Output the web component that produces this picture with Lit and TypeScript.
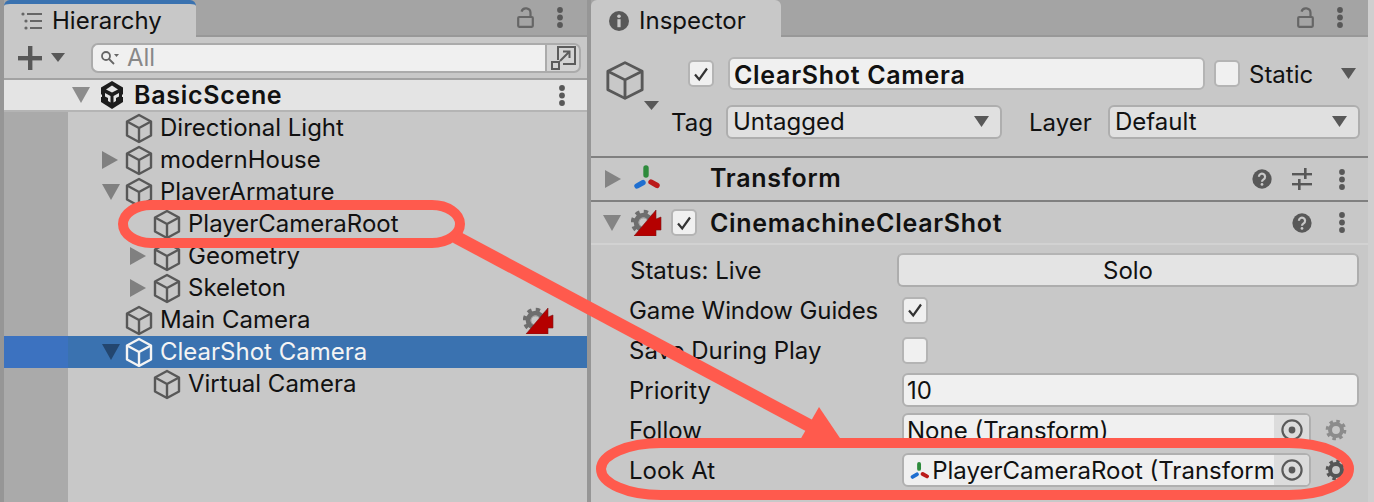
import { LitElement, html, css, svg } from "lit";
import { customElement } from "lit/decorators.js";

const GREY = "#585858";

const tri = (dir: "right" | "down", w: number, h: number, color = "#848484") => html`<svg class="tri" width=${w} height=${h} viewBox="0 0 10 10" preserveAspectRatio="none">
  <polygon points=${dir === "right" ? "0,0 10,5 0,10" : "0,0 10,0 5,10"} fill=${color}></polygon>
</svg>`;

const cube = (w = 28, h = 31, color = GREY, sw = 2.4) => html`<svg class="cube" width=${w} height=${h} viewBox="0 0 28 31" preserveAspectRatio="none" fill="none" stroke=${color} stroke-width=${sw} stroke-linejoin="round">
  <path d="M14 2 26 8.5V22.5L14 29 2 22.5V8.5Z"></path>
  <path d="M2 8.5 14 15 26 8.5M14 15V29"></path>
</svg>`;

const dots = () => html`<svg class="dots" width="8" height="21" viewBox="0 0 8 21" fill=${GREY}>
  <circle cx="4" cy="3" r="2.9"></circle><circle cx="4" cy="10.5" r="2.9"></circle><circle cx="4" cy="18" r="2.9"></circle>
</svg>`;

const lock = () => html`<svg width="17" height="21" viewBox="0 0 17 21" fill="none" stroke="#666" stroke-width="2.2">
  <rect x="1.2" y="10" width="14.6" height="9.8" rx="1"></rect>
  <path d="M13.5 10V6a4.6 4.6 0 0 0-9-1.4"></path>
</svg>`;

const axes = (s = 1) => html`<svg class="axes" width=${28 * s} height=${26 * s} viewBox="0 0 28 26" fill="none" stroke-width="5.4" stroke-linecap="round">
  <path d="M14 4V11" stroke="#2e8b3c"></path>
  <path d="M5 22 11 18.6" stroke="#1f6fd0"></path>
  <path d="M19 18 25 21.4" stroke="#bb1a1a"></path>
</svg>`;

const gearShape = (color: string) => svg`
  <circle cx="12" cy="12" r="6.5" fill="none" stroke=${color} stroke-width="4.4"></circle>
  <circle cx="12" cy="12" r="9.6" fill="none" stroke=${color} stroke-width="3.4" stroke-dasharray="3.8 3.74"></circle>`;

const gear = (color: string) => html`<svg width="22" height="22" viewBox="0 0 24 24">${gearShape(color)}</svg>`;

const camIcon = () => html`<svg width="31" height="27" viewBox="0 0 31 27">
  <g transform="translate(-1 0) scale(1.12)">${gearShape("#6e6e6e")}</g>
  <circle cx="12.5" cy="13.5" r="4.5" fill="none" stroke="#a0a0a0" stroke-width="1"></circle>
  <polygon points="3,27 25,1 25,10 30,8 30,21 25,21 25,27" fill="#b50000" stroke="#7a1a1a" stroke-width="0.6"></polygon>
</svg>`;

const help = () => html`<svg width="20" height="20" viewBox="0 0 22 22">
  <circle cx="11" cy="11" r="10.6" fill=${GREY}></circle>
  <path d="M7.6 8.6a3.4 3.4 0 1 1 5.2 2.8c-1.2.8-1.8 1.2-1.8 2.6" fill="none" stroke="#c8c8c8" stroke-width="2.4"></path>
  <circle cx="11" cy="17" r="1.5" fill="#c8c8c8"></circle>
</svg>`;

const sliders = () => html`<svg class="sliders" width="20" height="22" viewBox="0 0 20 22" fill=${GREY}>
  <rect x="0" y="5" width="20" height="2.4"></rect><rect x="12" y="0" width="2.6" height="11"></rect>
  <rect x="0" y="15" width="20" height="2.4"></rect><rect x="6" y="11" width="2.6" height="11"></rect>
</svg>`;

const picker = () => html`<svg width="26" height="26" viewBox="0 0 26 26">
  <circle cx="13" cy="13" r="9.6" fill="none" stroke="#5a5a5a" stroke-width="2.2"></circle>
  <circle cx="13" cy="13" r="3.4" fill="#5a5a5a"></circle>
</svg>`;

const check = () => html`<svg width="16" height="16" viewBox="0 0 16 16" fill="none" stroke="#333" stroke-width="2.2">
  <path d="M2 8.5 6.2 13.5 14 2.5"></path>
</svg>`;

type TreeRow = { name: string; depth: number; arrow?: "right" | "down"; selected?: boolean; cam?: boolean };

const TREE: TreeRow[] = [
  { name: "Directional Light", depth: 0 },
  { name: "modernHouse", depth: 0, arrow: "right" },
  { name: "PlayerArmature", depth: 0, arrow: "down" },
  { name: "PlayerCameraRoot", depth: 1 },
  { name: "Geometry", depth: 1, arrow: "right" },
  { name: "Skeleton", depth: 1, arrow: "right" },
  { name: "Main Camera", depth: 0, cam: true },
  { name: "ClearShot Camera", depth: 0, arrow: "down", selected: true },
  { name: "Virtual Camera", depth: 1 },
];

@customElement("app-root")
export class AppRoot extends LitElement {
  static styles = css`
    :host {
      display: block;
      position: relative;
      width: 1374px;
      height: 502px;
      overflow: hidden;
      font-family: Inter, "Liberation Sans", sans-serif;
      font-size: 24px;
      color: #111;
      background: #969696;
    }
    svg { display: block; flex: none; }
    .layout { display: flex; height: 502px; padding-left: 4px; box-sizing: border-box; }
    .panel { background: #c8c8c8; display: flex; flex-direction: column; }
    .hierarchy { width: 583px; margin-right: 4px; }
    .inspector { width: 777px; }
    .margin { width: 6px; background: #cfcfcf; }
    .bold { font-weight: 600; font-size: 25px; letter-spacing: 0.7px; }

    .strip {
      height: 37px;
      flex: none;
      display: flex;
      align-items: flex-start;
      background: #a4a4a4;
      box-sizing: border-box;
      border-bottom: 2px solid #989898;
    }
    .tab {
      height: 37px;
      box-sizing: border-box;
      display: flex;
      align-items: center;
      background: #c8c8c8;
      border-top-right-radius: 6px;
      border-top-left-radius: 6px;
    }
    .tab.h { width: 192px; padding-left: 17px; gap: 9px; border-top: 4px solid #3a72b0; }
    .tab.i { width: 190px; padding: 4px 0 0 18px; gap: 10px; }
    .strip-tools { margin-left: auto; display: flex; align-items: center; height: 35px; }
    .hierarchy .strip-tools { padding-right: 23px; gap: 22px; }
    .inspector .strip-tools { padding-right: 24px; gap: 22px; }

    .toolbar { height: 41px; flex: none; display: flex; align-items: center; padding-left: 14px; }
    .plus { width: 24px; height: 24px; margin-right: 9px; }
    .search {
      margin-left: 26px;
      width: 454px;
      height: 30px;
      box-sizing: border-box;
      display: flex;
      align-items: center;
      gap: 8px;
      padding-left: 7px;
      background: #f0f0f0;
      border: 2px solid #ababab;
      border-right: none;
      border-radius: 7px 0 0 7px;
      color: #888;
    }
    .search-btn {
      width: 36px;
      height: 30px;
      box-sizing: border-box;
      display: flex;
      align-items: center;
      justify-content: center;
      background: #d4d4d4;
      border: 2px solid #ababab;
      border-radius: 0 7px 7px 0;
    }
    .sep { height: 2px; flex: none; background: #a2a2a2; }
    .scene {
      height: 30px;
      flex: none;
      display: flex;
      align-items: center;
      background: #e4e4e4;
      padding-left: 68px;
    }
    .scene .tri { margin-right: 10px; }
    .scene .logo { margin-right: 10px; }
    .scene .dots { margin-left: auto; margin-right: 21px; }
    .scene-sep { height: 2px; flex: none; background: #b4b4b4; }

    .tree { flex: 1; background: linear-gradient(to right, #aaaaaa 64px, #c8c8c8 64px); }
    .row { height: 32px; display: flex; align-items: center; white-space: nowrap; }
    .row.selected {
      background: linear-gradient(to right, #3c72c0 64px, #3a72b0 64px);
      color: #f4f4f4;
    }
    .arrow-slot { width: 23px; flex: none; padding-left: 4px; }
    .row .cube { margin-right: 7px; }
    .row .label { margin-top: -2px; }
    .row .cam { margin-left: auto; margin-right: 33px; }

    .head { height: 119px; flex: none; display: flex; box-sizing: border-box; padding-top: 20px; }
    .head-icon { width: 81px; flex: none; padding: 3px 0 0 14px; box-sizing: border-box; }
    .head-icon .tri { margin: 0 0 0 39px; }
    .head-main { flex: none; width: 688px; }
    .head-row { display: flex; align-items: center; }
    .head-row.one { height: 33px; padding-left: 16px; }
    .head-row.two { height: 34px; margin-top: 15px; }
    .checkbox {
      width: 26px;
      height: 27px;
      flex: none;
      box-sizing: border-box;
      display: flex;
      align-items: center;
      justify-content: center;
      background: #f0f0f0;
      border: 2px solid #b4b4b4;
      border-radius: 5px;
    }
    .name {
      width: 477px;
      height: 33px;
      flex: none;
      margin: 0 9px 0 14px;
      box-sizing: border-box;
      padding: 2px 0 0 4px;
      display: flex;
      align-items: center;
      background: #f0f0f0;
      border: 2px solid #b4b4b4;
      border-radius: 6px;
    }
    .static { margin-left: 9px; padding-top: 2px; }
    .head-row.one .tri { margin-left: 28px; }
    .tag { width: 55px; flex: none; margin-left: -1px; }
    .layer { width: 79px; flex: none; margin-left: 27px; }
    .select {
      height: 34px;
      flex: none;
      box-sizing: border-box;
      display: flex;
      align-items: center;
      justify-content: space-between;
      padding: 0 11px 2px 5px;
      background: #e0e0e0;
      border: 2px solid #aeaeae;
      border-radius: 6px;
    }
    .select.tag-sel { width: 276px; }
    .select.layer-sel { width: 252px; }

    .divider { height: 2px; flex: none; background: #808080; }
    .comp { display: flex; align-items: center; flex: none; }
    .comp.t { height: 42px; }
    .comp.c { height: 41px; }
    .comp .tri { margin-left: 14px; }
    .comp.t .bold { margin-top: -2px; }
    .comp .tools { margin-left: auto; display: flex; align-items: center; gap: 20px; padding-right: 22px; }
    .comp .tools .dots { margin-left: 6px; }
    .comp.t .ic { margin-left: 11px; margin-right: 50px; }
    .comp.t .axes { margin-top: -4px; }
    .comp.c .tri { margin-left: 12px; }
    .comp.c .ic { margin-left: 10px; margin-right: 9px; }
    .comp.c .checkbox { margin-right: 13px; }
    .thin { height: 2px; flex: none; background: #d2d2d2; }

    .props { padding: 5px 9px 0 38px; }
    .prop { height: 40px; display: grid; grid-template-columns: 273px 1fr; align-items: center; }
    .prop .first { padding-left: 1px; }
    .prop .tight { letter-spacing: -0.11px; }
    .prop .value { display: flex; align-items: center; min-width: 0; }
    .solo {
      margin-left: -5px;
      height: 34px;
      flex: 1;
      box-sizing: border-box;
      display: flex;
      align-items: center;
      justify-content: center;
      background: #e4e4e4;
      border: 2px solid #adadad;
      border-top-color: #b4b4b4;
      border-radius: 6px;
    }
    .field {
      height: 34px;
      flex: 1;
      min-width: 0;
      box-sizing: border-box;
      display: flex;
      align-items: center;
      background: #f0f0f0;
      border: 2px solid #b0b0b0;
      border-radius: 6px;
      overflow: hidden;
      white-space: nowrap;
    }
    .field .text { flex: 1; min-width: 0; overflow: hidden; padding-left: 3px; display: flex; align-items: center; }
    .field .text svg { margin: 0 3px 0 2px; }
    .field .pick {
      width: 35px;
      height: 100%;
      flex: none;
      display: flex;
      align-items: center;
      justify-content: center;
      background: #dcdcdc;
    }
    .obj-gear { width: 48px; flex: none; box-sizing: border-box; padding-left: 2px; display: flex; justify-content: center; }

    .overlay { position: absolute; left: 0; top: 0; pointer-events: none; }
  `;

  private renderRow(r: TreeRow) {
    const color = r.selected ? "#f4f4f4" : GREY;
    const arrowColor = r.selected ? "#23466f" : "#808080";
    return html`<div class="row ${r.selected ? "selected" : ""}" style="padding-left:${94 + 28 * r.depth}px">
      <span class="arrow-slot">${r.arrow === "right" ? tri("right", 16, 18, arrowColor) : r.arrow === "down" ? tri("down", 18, 16, arrowColor) : ""}</span>
      ${cube(28, 31, color)}
      <span class="label">${r.name}</span>
      ${r.cam ? html`<span class="cam">${camIcon()}</span>` : ""}
    </div>`;
  }

  private renderObjField(icon: boolean, label: string, gearColor: string) {
    return html`<div class="value">
      <div class="field">
        <div class="text">${icon ? axes(0.72) : ""}<span>${label}</span></div>
        <div class="pick">${picker()}</div>
      </div>
      <div class="obj-gear">${gear(gearColor)}</div>
    </div>`;
  }

  private renderHierarchy() {
    return html`<section class="panel hierarchy">
      <div class="strip">
        <div class="tab h">
          <svg width="22" height="18" viewBox="0 0 22 18" fill="#666">
            <circle cx="2" cy="2" r="1.6"></circle><rect x="6" y="1" width="15" height="2"></rect>
            <circle cx="5" cy="9" r="1.6"></circle><rect x="9" y="8" width="12" height="2"></rect>
            <circle cx="5" cy="16" r="1.6"></circle><rect x="9" y="15" width="12" height="2"></rect>
          </svg>
          <span>Hierarchy</span>
        </div>
        <div class="strip-tools">${lock()}${dots()}</div>
      </div>
      <div class="toolbar">
        <div class="plus">
          <svg width="24" height="24" viewBox="0 0 24 24" fill=${GREY}><rect x="10" y="0" width="4.4" height="24"></rect><rect x="0" y="10" width="24" height="4.4"></rect></svg>
        </div>
        ${tri("down", 14, 9, GREY)}
        <div class="search">
          <svg width="19" height="16" viewBox="0 0 19 16" fill="none" stroke="#666" stroke-width="1.8">
            <circle cx="6" cy="6" r="4"></circle><path d="M9 9 14 14"></path>
            <polygon points="14,4 19,4 16.5,7" fill="#666" stroke="none"></polygon>
          </svg>
          <span>All</span>
        </div>
        <div class="search-btn">
          <svg width="25" height="26" viewBox="0 0 25 26" fill="none" stroke="#5c5c5c" stroke-width="2">
            <path d="M7 15V2H24V19H12"></path><rect x="1" y="17" width="7" height="7"></rect>
            <path d="M9 16 18 7M12 6.5H18.5V13"></path>
          </svg>
        </div>
      </div>
      <div class="sep"></div>
      <div class="scene">
        ${tri("down", 18, 16, "#8c8c8c")}
        <svg class="logo" width="24" height="28" viewBox="0 0 24 28">
          <polygon points="12,0 23,6.5 23,21 12,28 1,21 1,6.5" fill="#1c1c1c"></polygon>
          <polygon points="12,4.5 18,8.5 12,11.5 6,8.5" fill="#e4e4e4"></polygon>
          <polygon points="5,12 10.5,15 10.5,21.5 8,20 8,17 5,15.5" fill="#e4e4e4"></polygon>
          <polygon points="19,12 13.5,15 13.5,21.5 16,20 16,17 19,15.5" fill="#e4e4e4"></polygon>
          <polygon points="0,12 2,14 2,16 0,16" fill="#e4e4e4"></polygon>
          <polygon points="24,12 22,14 22,16 24,16" fill="#e4e4e4"></polygon>
        </svg>
        <span class="bold">BasicScene</span>
        ${dots()}
      </div>
      <div class="scene-sep"></div>
      <div class="tree">${TREE.map((r) => this.renderRow(r))}</div>
    </section>`;
  }

  private renderInspector() {
    return html`<section class="panel inspector">
      <div class="strip">
        <div class="tab i">
          <svg width="20" height="20" viewBox="0 0 20 20">
            <circle cx="10" cy="10" r="10" fill=${GREY}></circle>
            <circle cx="10" cy="5.2" r="1.8" fill="#c8c8c8"></circle>
            <rect x="8.4" y="8.2" width="3.2" height="8" fill="#c8c8c8"></rect>
          </svg>
          <span>Inspector</span>
        </div>
        <div class="strip-tools">${lock()}${dots()}</div>
      </div>
      <div class="head">
        <div class="head-icon">${cube(40, 41, GREY, 2)}${tri("down", 15, 9, GREY)}</div>
        <div class="head-main">
          <div class="head-row one">
            <div class="checkbox">${check()}</div>
            <div class="name bold">ClearShot Camera</div>
            <div class="checkbox"></div>
            <span class="static">Static</span>
            ${tri("down", 15, 11, GREY)}
          </div>
          <div class="head-row two">
            <span class="tag">Tag</span>
            <div class="select tag-sel"><span>Untagged</span>${tri("down", 15, 11, GREY)}</div>
            <span class="layer">Layer</span>
            <div class="select layer-sel"><span>Default</span>${tri("down", 15, 11, GREY)}</div>
          </div>
        </div>
      </div>
      <div class="divider"></div>
      <div class="comp t">
        ${tri("right", 16, 18, "#848484")}
        <span class="ic">${axes()}</span>
        <span class="bold">Transform</span>
        <div class="tools">${help()}${sliders()}${dots()}</div>
      </div>
      <div class="divider"></div>
      <div class="comp c">
        ${tri("down", 18, 16, "#848484")}
        <span class="ic">${camIcon()}</span>
        <div class="checkbox">${check()}</div>
        <span class="bold">CinemachineClearShot</span>
        <div class="tools">${help()}${dots()}</div>
      </div>
      <div class="thin"></div>
      <div class="props">
        <div class="prop"><span class="first">Status: Live</span><div class="value"><div class="solo">Solo</div></div></div>
        <div class="prop"><span class="tight">Game Window Guides</span><div class="value"><div class="checkbox">${check()}</div></div></div>
        <div class="prop"><span>Save During Play</span><div class="value"><div class="checkbox"></div></div></div>
        <div class="prop"><span>Priority</span><div class="value"><div class="field"><div class="text">10</div></div></div></div>
        <div class="prop"><span>Follow</span>${this.renderObjField(false, "None (Transform)", "#8c8c8c")}</div>
        <div class="prop"><span>Look At</span>${this.renderObjField(true, "PlayerCameraRoot (Transform)", "#555555")}</div>
      </div>
    </section>`;
  }

  render() {
    return html`
      <div class="layout">
        ${this.renderHierarchy()}
        ${this.renderInspector()}
        <div class="margin"></div>
      </div>
      <svg class="overlay" width="1374" height="502" fill="none" stroke="#ff5a4d" stroke-width="10">
        <rect x="123" y="205" width="337" height="38" rx="28" ry="19"></rect>
        <line x1="456" y1="237" x2="812" y2="427" stroke-width="13"></line>
        <polygon points="819,407 846,447 796,447" fill="#ff5a4d" stroke="none"></polygon>
        <rect x="601" y="443" width="748" height="52" rx="60" ry="26"></rect>
      </svg>
    `;
  }
}
